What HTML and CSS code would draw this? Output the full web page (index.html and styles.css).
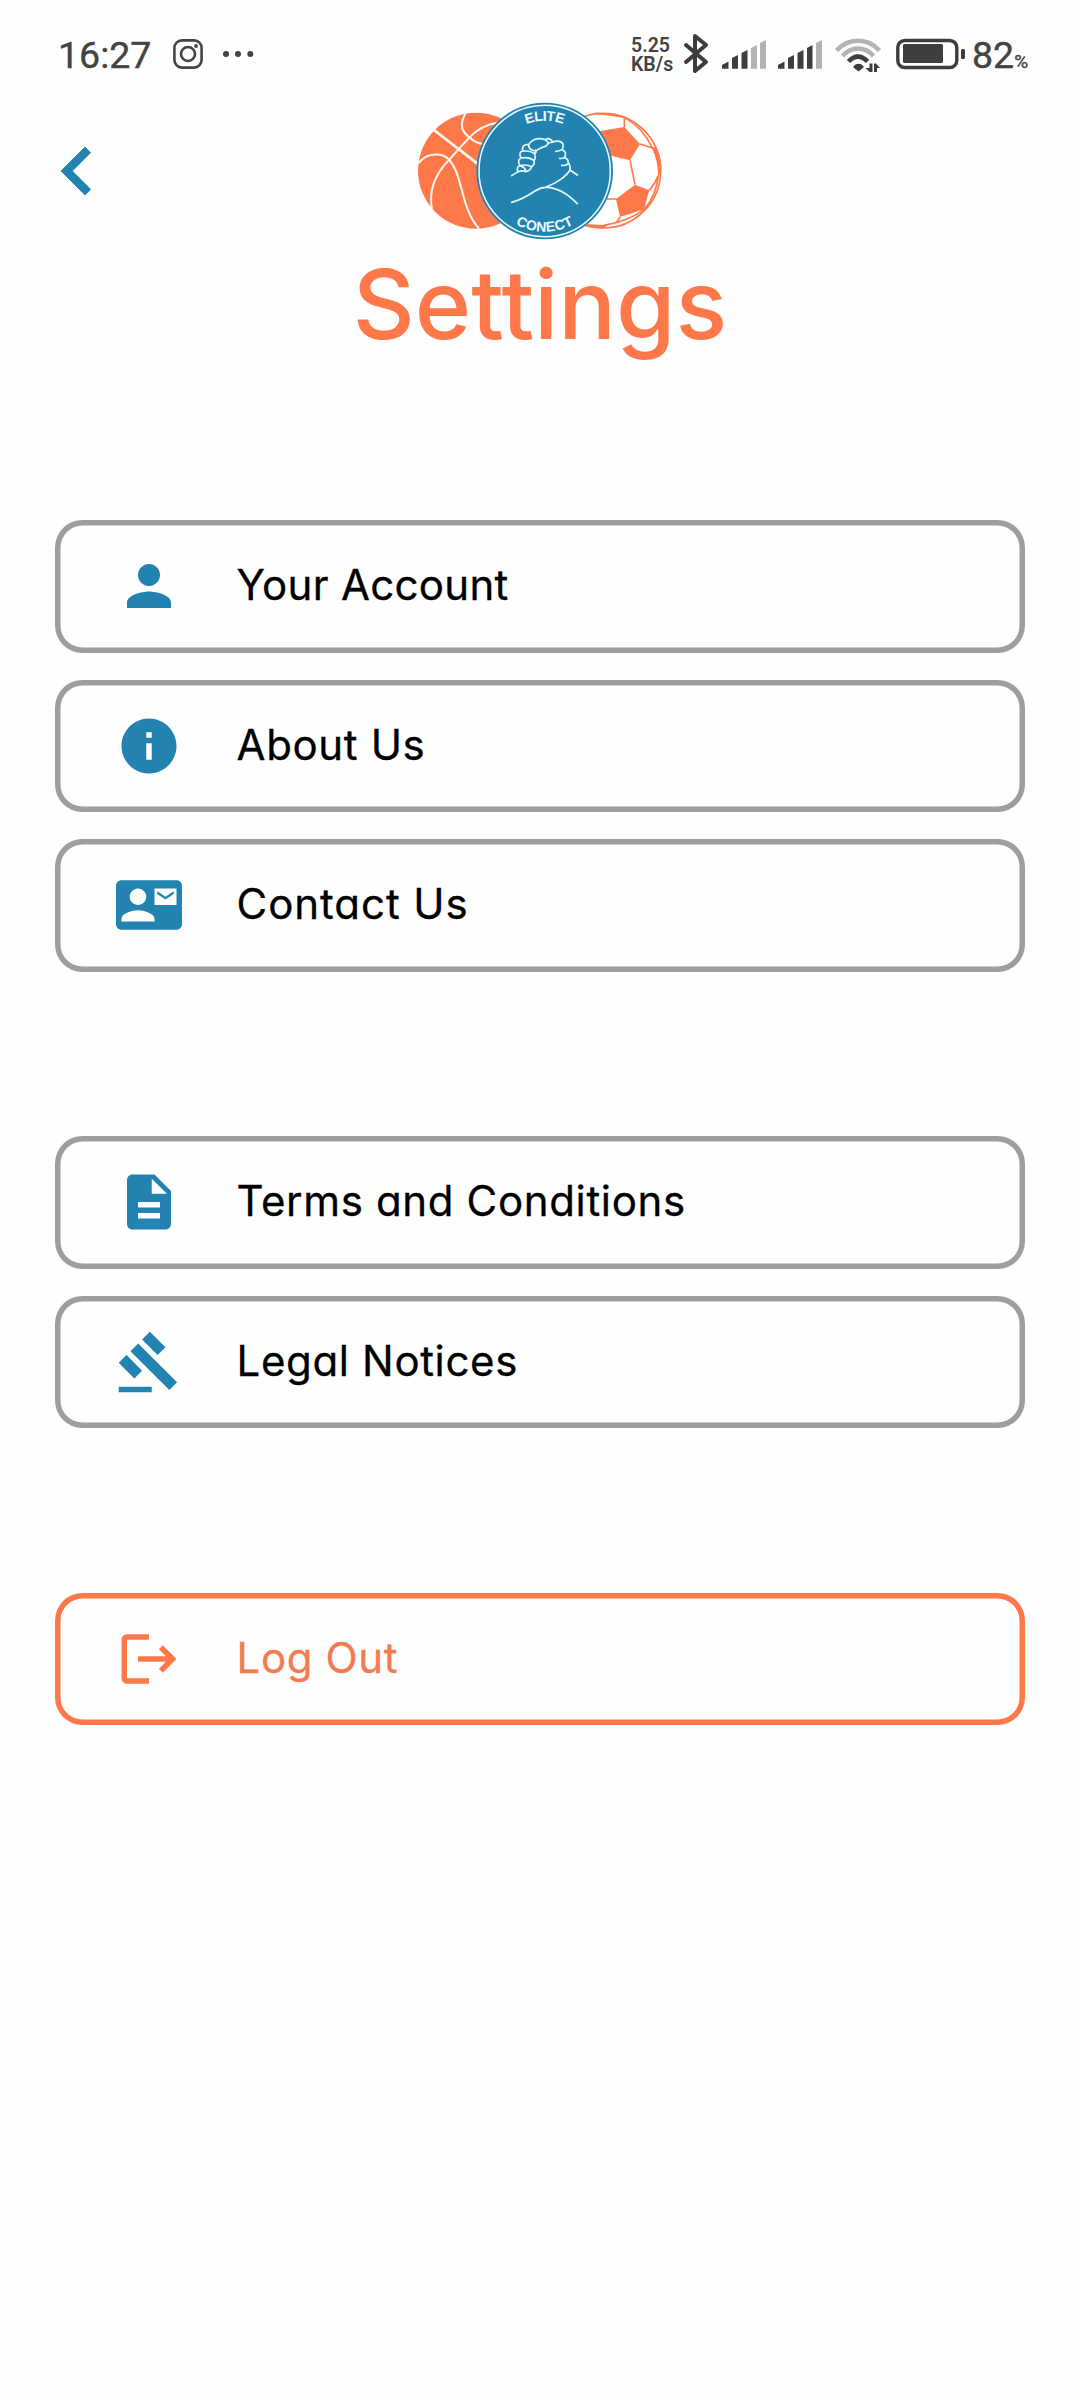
FILE: index.html
```html
<!DOCTYPE html>
<html lang="en">
<head>
<meta charset="utf-8">
<title>Settings</title>
<link rel="stylesheet" href="styles.css">
</head>
<body>
<div class="status">
  <div class="status-left">
    <span class="clock">16:27</span>
    <svg class="insta" width="30" height="30" viewBox="0 0 30 30" fill="none" stroke="#434343" stroke-width="2.6"><rect x="1.4" y="1.4" width="27.2" height="27.2" rx="7.5"/><circle cx="15" cy="15" r="7"/><circle cx="23" cy="7" r="1.9" fill="#434343" stroke="none"/></svg>
    <svg class="dots" width="32" height="8" viewBox="0 0 32 8" fill="#434343"><circle cx="4" cy="4" r="3"/><circle cx="16" cy="4" r="3"/><circle cx="28.3" cy="4" r="3"/></svg>
  </div>
  <div class="status-right">
    <div class="speed"><span>5.25</span><span>KB/s</span></div>
    <svg class="icons" width="285" height="50" viewBox="680 30 285 50">
      <path d="M686 45 706 62 695 71V36l11 9-20 17" fill="none" stroke="#3d3d3d" stroke-width="4" stroke-linejoin="round" stroke-linecap="round"/>
      <g fill="#3d3d3d">
        <path d="M722 65l6.500-3.500v7.200h-6.500zM732 58l6-3v13.700h-6zM741.500 53l6-3v18.700h-6z"/>
        <path fill="#b3b3b3" d="M751 48l6-3v23.700h-6zM760 43l6-3v28.700h-6z"/>
        <path d="M778 65l6.500-3.500v7.200h-6.500zM788 58l6-3v13.700h-6zM797.500 53l6-3v18.700h-6zM807 48l5.500-3v23.700h-5.500z"/>
        <path fill="#b3b3b3" d="M816 43l6-3v28.700h-6z"/>
        <path d="M853 67c2.500-4.500 8.500-4.500 11 0l-5.500 4.500zM869.500 63.500h3V72h-3l-4-4h4zM874 72v-8.500h2l4 4.500h-3v4z"/>
      </g>
      <g fill="none" stroke-width="4.600">
        <path d="M836.500 50.500c12-13 31-13 43 0M842.500 56c9-10 22-10 31 0" stroke="#b3b3b3"/>
        <path d="M848.500 61.500c6-6.500 13-6.500 19 0" stroke="#3d3d3d"/>
      </g>
      <rect x="897.800" y="40.500" width="59" height="27" rx="7" fill="none" stroke="#3d3d3d" stroke-width="3.400"/>
      <rect x="903" y="44" width="40" height="19" rx="1.500" fill="#3d3d3d"/>
      <rect x="961" y="49" width="4" height="10" rx="1.500" fill="#3d3d3d"/>
    </svg>
    <span class="battery">82<small>%</small></span>
  </div>
</div>
<header class="header">
  <svg class="back" width="96" height="96" viewBox="0 0 24 24"><path d="M15.410 7.410L14 6l-6 6 6 6 1.410-1.410L10.830 12z"/></svg>
  <svg class="logo" width="280" height="160" viewBox="0 0 840 480">
    <defs>
      <path id="arc-top" d="M283 243a151 151 0 0 1 302 0"/>
      <path id="arc-bottom" d="M252 243a182 182 0 0 0 364 0"/>
    </defs>
    <!-- basketball -->
    <circle cx="228" cy="242" r="174" fill="#ff784a"/>
    <g fill="none" stroke="#fff8ee" stroke-width="6">
      <path stroke-width="8" d="M102 120 235 223"/>
      <path d="M96 359C84 295 112 245 148 209L208 142Q246 104 292 98"/>
      <path d="M55 220C82 184 130 188 148 210C190 258 180 350 237 416"/>
      <path d="M197 70C176 105 188 128 208 142Q225 158 247 162"/>
    </g>
    <!-- football -->
    <circle cx="610" cy="242" r="172" fill="#fff" stroke="#ff784a" stroke-width="5"/>
    <g fill="#ff784a">
      <path d="M600 123 673 111 720 162 690 211 632 197 600 170z"/>
      <path d="M705 284 748 301 732 358 660 381 648 327z"/>
      <path d="M755 173 768 170Q786 210 784 245L774 262Q776 215 755 173z"/>
      <path d="M555 402 612 405 632 400 608 416 560 410z"/>
    </g>
    <g fill="none" stroke="#ff784a" stroke-width="5">
      <path d="M585 70Q640 74 673 82Q728 112 757 174M673 82V112M720 162 757 174M690 211 705 284M748 301Q766 280 775 256M620 327H650M775 256Q768 320 732 358M732 358Q690 392 612 406M660 381Q654 395 640 402"/>
    </g>
    <!-- badge -->
    <circle cx="434" cy="243" r="205" fill="#2283b1"/>
    <circle cx="434" cy="243" r="197" fill="none" stroke="#f2fbff" stroke-width="4.500"/>
    <g fill="none" stroke="#e4f7fb" stroke-width="5" stroke-linecap="round" stroke-linejoin="round">
      <path d="M335 337Q370 327 405 303Q422 291 440 292Q485 293 532 341M438 291C470 280 500 258 510 240L532 255M335 257 354 245"/>
      <path d="M354 245C350 235 352 229 360 227C353 216 355 206 364 204C356 193 360 184 369 183C364 170 372 162 386 164Q390 155 402 149Q418 142 437 150L445 158Q442 168 429 171L418 176Q407 186 396 180Q386 176 386 164"/>
      <path d="M369 183Q393 182 403 191Q411 186 408 180M364 204Q388 200 402 212Q409 202 403 191M360 227Q380 222 395 230Q405 224 402 212M354 245Q368 240 378 245Q392 242 395 230M360 227Q376 232 378 245"/>
      <path d="M437 148Q448 141 459 156L445 159M459 156Q480 149 489 162Q490 172 487 179Q499 186 496 194L495 203Q507 209 504 218Q512 226 510 240M487 178Q478 184 467 184M496 200Q490 207 479 205M504 222Q495 228 485 226"/>
    </g>
    <g class="badge-text">
      <text><textPath href="#arc-top" startOffset="50%" textLength="113">ELITE</textPath></text>
      <text><textPath href="#arc-bottom" startOffset="50%" textLength="182">CONECT</textPath></text>
    </g>
  </svg>
</header>
<h1 class="title">Se<span class="tie">t</span>tings</h1>
<main class="menu">
  <section class="group">
    <a class="item item-snug"><svg class="icon" viewBox="0 0 24 24"><path d="M12 12c2.210 0 4-1.790 4-4s-1.790-4-4-4-4 1.790-4 4 1.790 4 4 4zm0 2c-2.670 0-8 1.340-8 4v2h16v-2c0-2.660-5.330-4-8-4z"/></svg><span>Your Account</span></a>
    <a class="item"><svg class="icon" viewBox="0 0 24 24"><path d="M12 2C6.480 2 2 6.480 2 12s4.480 10 10 10 10-4.480 10-10S17.520 2 12 2zm1 15h-2v-6h2v6zm0-8h-2V7h2v2z"/></svg><span>About Us</span></a>
    <a class="item item-wide"><svg class="icon" viewBox="0 0 24 24"><path d="M21 8V7l-3 2-3-2v1l3 2 3-2zm1-5H2C.9 3 0 3.900 0 5v14c0 1.100.9 2 2 2h20c1.100 0 1.990-.9 1.990-2L24 5c0-1.100-.9-2-2-2zM8 6c1.660 0 3 1.340 3 3s-1.340 3-3 3-3-1.340-3-3 1.340-3 3-3zm6 12H2v-1c0-2 4-3.100 6-3.100s6 1.100 6 3.100v1zm8-6h-8V6h8v6z"/></svg><span>Contact Us</span></a>
  </section>
  <section class="group">
    <a class="item"><svg class="icon" viewBox="0 0 24 24"><path d="M14 2H6c-1.100 0-1.990.9-1.990 2L4 20c0 1.100.89 2 1.990 2H18c1.100 0 2-.9 2-2V8l-6-6zm2 16H8v-2h8v2zm0-4H8v-2h8v2zm-3-5V3.500L18.500 9H13z"/></svg><span>Terms and Conditions</span></a>
    <a class="item"><svg class="icon" viewBox="0 0 24 24"><path d="M1 21h12v2H1zM5.245 8.070l2.830-2.827 14.140 14.142-2.828 2.828zM12.317 1l5.657 5.656-2.830 2.830-5.654-5.660zM3.825 9.485l5.657 5.657-2.828 2.828-5.657-5.657z"/></svg><span>Legal Notices</span></a>
  </section>
  <section class="group">
    <a class="item item-out"><svg class="icon" viewBox="0 0 24 24"><path d="M17 7l-1.410 1.410L18.170 11H8v2h10.170l-2.580 2.580L17 17l5-5zM4 5h8V3H4c-1.100 0-2 .9-2 2v14c0 1.100.9 2 2 2h8v-2H4V5z"/></svg><span>Log Out</span></a>
  </section>
</main>
</body>
</html>
```
FILE: styles.css
```css
*{box-sizing:border-box}
body{margin:0;width:1080px;height:2400px;background:#fefefe;font-family:Inter,"Liberation Sans",sans-serif;overflow:hidden}
.status{height:104px;padding:0 51px 0 58px;display:flex;justify-content:space-between;color:#434343;font-family:Roboto,sans-serif}
.status-left,.status-right{display:flex;align-items:flex-start}
.clock{width:95px;font-size:37.500px;line-height:44px;margin-top:33px;-webkit-text-stroke:.4px}
.insta{margin:39px 0 0 20px}
.dots{margin:50px 0 0 19px}
.speed{width:41px;display:flex;flex-direction:column;font-size:19.500px;line-height:19px;font-weight:600;margin-top:36px}
.icons{margin:30px 0 0 8px}
.battery{width:57px;font-size:37.500px;-webkit-text-stroke:.4px;line-height:44px;margin:33px 0 0 7px;white-space:nowrap}
.battery small{font-size:19px}
.header{height:146px;display:flex;align-items:flex-start}
.back{margin:18.500px 0 0 29px;fill:#2283b1;stroke:#2283b1;stroke-width:.2}
.logo{margin:-14px 0 0 275px}
.badge-text{font:bold 42px "Liberation Sans",sans-serif;fill:#f2fbff;text-anchor:middle}
.title{margin:0;height:270px;line-height:108px;text-align:center;font-size:96px;font-weight:500;color:#ff784a}
.tie{letter-spacing:-2.500px}
.menu{display:grid;gap:164.500px;padding:0 55px}
.group{display:grid;gap:27px}
.item{height:132.500px;border-radius:27.500px;box-shadow:inset 0 0 0 5.500px #9e9e9e;display:flex;align-items:center;padding-left:60.500px;gap:55px;font-size:42px;letter-spacing:.65px;color:#000;font-feature-settings:"cv11";-webkit-text-stroke:.3px}
.item span{padding-bottom:3px}
.item-snug{letter-spacing:.3px}
.item-wide{letter-spacing:.95px}
.icon{width:66px;height:66px;fill:#2283b1}
.item-out{box-shadow:inset 0 0 0 5.500px #ff784a;color:#f47b50}
.item-out .icon{fill:#ff784a}
```
